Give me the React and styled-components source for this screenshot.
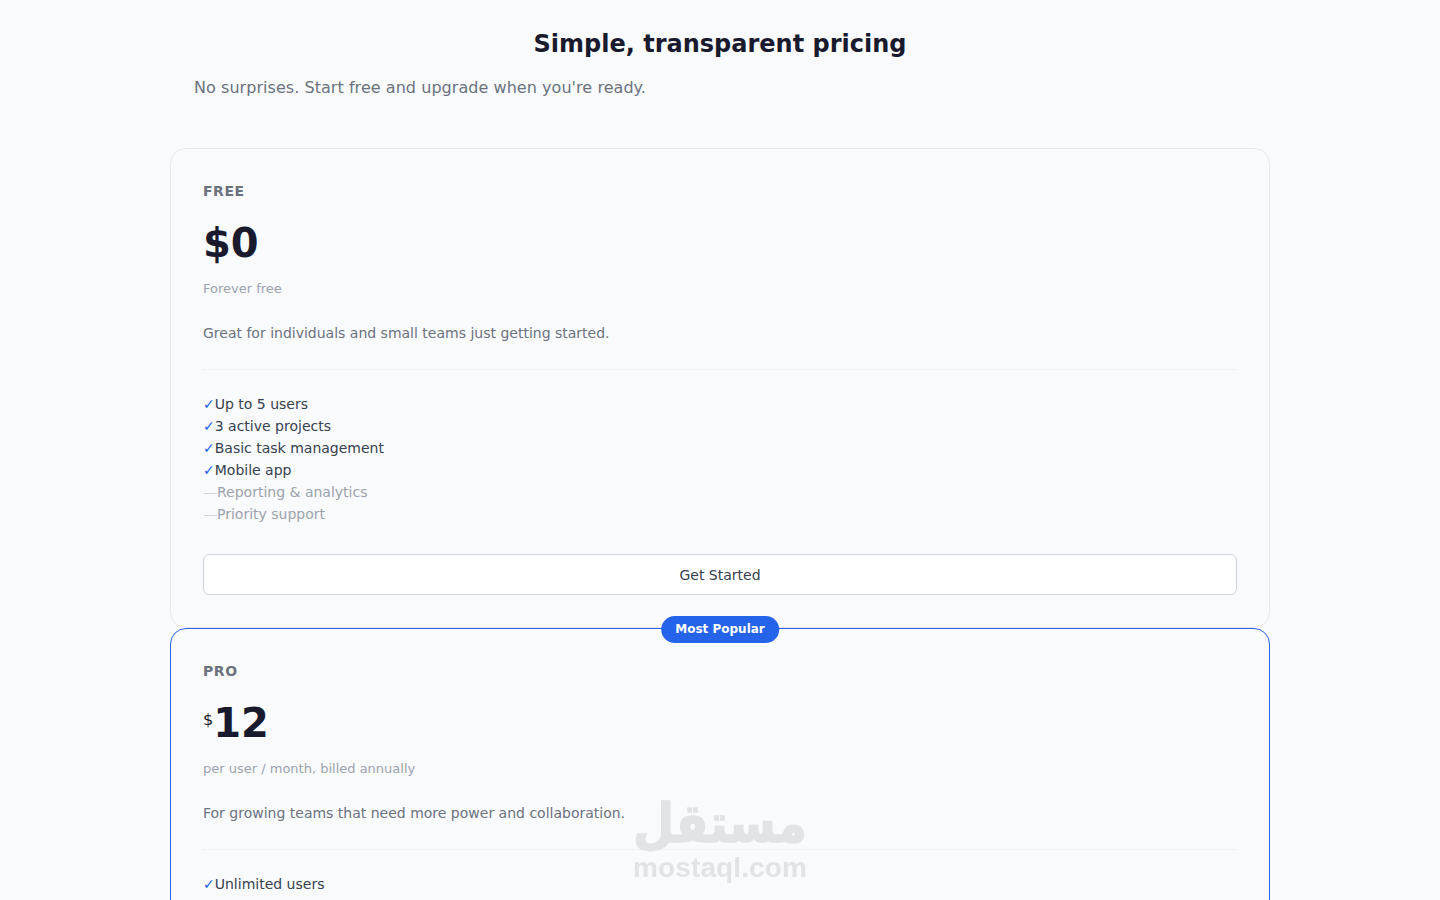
import styled, { createGlobalStyle } from "styled-components";

const GlobalStyle = createGlobalStyle`
    * {
        box-sizing: border-box;
    }

    body {
        margin: 0;
        background-color: #F9FAFB;
        font-family: "DejaVu Sans", sans-serif;
        color: #1A1A2E;
    }
`;

const plans = [
    {
        name: "FREE",
        price: "0",
        bigCurrency: true,
        period: "Forever free",
        description: "Great for individuals and small teams just getting started.",
        features: [
            { text: "Up to 5 users", included: true },
            { text: "3 active projects", included: true },
            { text: "Basic task management", included: true },
            { text: "Mobile app", included: true },
            { text: "Reporting & analytics", included: false },
            { text: "Priority support", included: false },
        ],
        cta: "Get Started",
    },
    {
        name: "PRO",
        price: "12",
        popular: true,
        period: "per user / month, billed annually",
        description: "For growing teams that need more power and collaboration.",
        features: [{ text: "Unlimited users", included: true }],
    },
];

export default function App() {
    return (
        <Page>
            <GlobalStyle />
            <Title>Simple, transparent pricing</Title>
            <Subtitle>No surprises. Start free and upgrade when you're ready.</Subtitle>
            <Plans>
                {plans.map((plan) => (
                    <Card key={plan.name} $popular={plan.popular}>
                        {plan.popular && <Badge>Most Popular</Badge>}
                        <PlanName>{plan.name}</PlanName>
                        <Price>
                            {plan.bigCurrency ? "$" : <Currency>$</Currency>}
                            {plan.price}
                        </Price>
                        <Period>{plan.period}</Period>
                        <Description>{plan.description}</Description>
                        <Divider />
                        <Features>
                            {plan.features.map((f) => (
                                <Feature key={f.text} $included={f.included}>
                                    <Mark $included={f.included}>{f.included ? "✓" : "—"}</Mark>
                                    {f.text}
                                </Feature>
                            ))}
                        </Features>
                        {plan.cta && <Cta>{plan.cta}</Cta>}
                    </Card>
                ))}
            </Plans>
            <Watermark>
                <WatermarkArabic>مستقل</WatermarkArabic>
                <WatermarkLatin>mostaql.com</WatermarkLatin>
            </Watermark>
        </Page>
    );
}

const Page = styled.main`
    width: 1100px;
    margin: 0 auto;
    padding-top: 29px;
`;

const Title = styled.h1`
    margin: 0;
    font-size: 24px;
    line-height: 31px;
    font-weight: 700;
    text-align: center;
    color: #1A1A2E;
`;

const Subtitle = styled.p`
    margin: 17px 0 0;
    padding-left: 24px;
    font-size: 16px;
    line-height: 22px;
    letter-spacing: 0.05px;
    color: #6B7280;
`;

const Plans = styled.div`
    display: flex;
    flex-direction: column;
    margin-top: 49px;
`;

const Card = styled.section`
    position: relative;
    padding: 32px;
    border: 1px solid ${(props) => (props.$popular ? "#2563EB" : "#E5E7EB")};
    border-radius: 16px;
`;

const Badge = styled.span`
    position: absolute;
    top: -13px;
    left: 50%;
    transform: translateX(-50%);
    height: 27px;
    padding: 0 14px;
    border-radius: 14px;
    background-color: #2563EB;
    color: #FFFFFF;
    font-size: 12px;
    line-height: 27px;
    font-weight: 700;
    white-space: nowrap;
`;

const PlanName = styled.div`
    font-size: 14px;
    line-height: 20px;
    font-weight: 700;
    letter-spacing: 0.56px;
    color: #6B7280;
`;

const Price = styled.div`
    margin-top: 18px;
    font-size: 40px;
    line-height: 48px;
    font-weight: 700;
    color: #1A1A2E;
`;

const Currency = styled.span`
    font-size: 16px;
    font-weight: 400;
    vertical-align: 12px;
    line-height: 0;
`;

const Period = styled.div`
    margin-top: 13px;
    font-size: 13px;
    line-height: 18px;
    color: #9CA3AF;
`;

const Description = styled.p`
    margin: 25px 0 0;
    font-size: 14px;
    line-height: 20px;
    color: #6B7280;
`;

const Divider = styled.hr`
    margin: 26px 0 0;
    border: 0;
    border-top: 1px dotted #EBECEF;
`;

const Features = styled.ul`
    display: flex;
    flex-direction: column;
    margin: 23px 0 0;
    padding: 0;
    list-style: none;
`;

const Feature = styled.li`
    font-size: 14px;
    line-height: 22px;
    color: ${(props) => (props.$included ? "#374151" : "#9CA3AF")};
`;

const Mark = styled.span`
    color: ${(props) => (props.$included ? "#2563EB" : "#D1D5DB")};
`;

const Cta = styled.button`
    display: block;
    width: 100%;
    height: 41px;
    margin-top: 29px;
    border: 1px solid #D1D5DB;
    border-radius: 6px;
    background-color: #FFFFFF;
    color: #374151;
    font-family: inherit;
    font-size: 14px;
`;

const Watermark = styled.div`
    position: fixed;
    left: 50%;
    top: 793px;
    transform: translateX(-50%);
    display: flex;
    flex-direction: column;
    align-items: center;
    pointer-events: none;
    color: #E2E3E5;
`;

const WatermarkArabic = styled.div`
    font-family: "DejaVu Sans", sans-serif;
    font-size: 54px;
    line-height: 61px;
    font-weight: 700;
    -webkit-text-stroke: 1.5px #E2E3E5;
    transform: scaleX(0.88);
`;

const WatermarkLatin = styled.div`
    font-family: "Liberation Sans", sans-serif;
    font-size: 28px;
    line-height: 28px;
    font-weight: 700;
    letter-spacing: 0.1px;
`;
